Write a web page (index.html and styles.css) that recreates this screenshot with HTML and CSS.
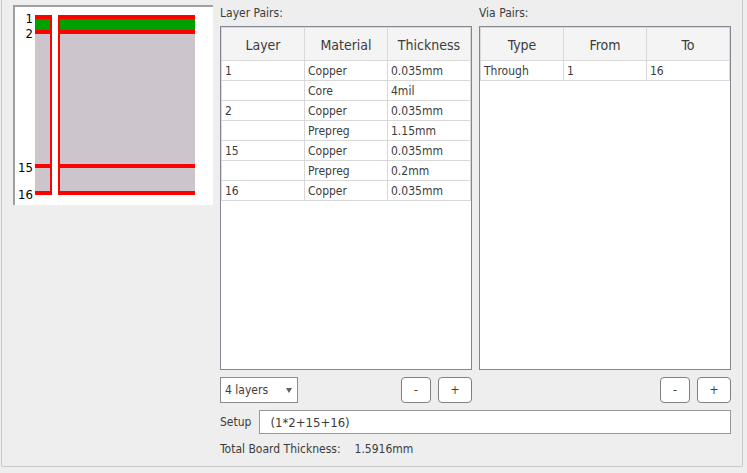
FILE: index.html
```html
<!DOCTYPE html>
<html lang="en">
<head>
<meta charset="utf-8">
<title>Board Layers</title>
<link rel="stylesheet" href="styles.css">
</head>
<body>
<main class="panel">
  <div class="preview">
    <svg class="stack" viewBox="0 0 198 198" width="198" height="198" role="img" aria-label="Layer stack preview">
      <g shape-rendering="crispEdges">
        <rect class="prepreg" x="20" y="8" width="160" height="180"/>
        <rect class="core" x="20" y="12" width="160" height="11"/>
        <rect class="copper" x="20" y="8" width="160" height="4"/>
        <rect class="copper" x="20" y="23" width="160" height="4"/>
        <rect class="copper" x="20" y="157" width="160" height="4"/>
        <rect class="copper" x="20" y="184" width="160" height="4"/>
        <rect class="copper" x="35" y="8" width="10" height="180"/>
        <rect class="hole" x="37" y="8" width="6" height="180"/>
      </g>
      <g class="stack-label" text-anchor="end">
        <text x="18" y="16">1</text>
        <text x="18" y="31">2</text>
        <text x="18" y="165">15</text>
        <text x="18" y="192">16</text>
      </g>
    </svg>
  </div>
  <div class="settings">
    <div class="pairs">
      <section class="pair">
        <h2 class="caption" id="layer-caption">Layer Pairs:</h2>
        <div class="list">
          <table class="grid" aria-labelledby="layer-caption">
            <thead><tr><th>Layer</th><th>Material</th><th>Thickness</th></tr></thead>
            <tbody>
              <tr><td>1</td><td>Copper</td><td>0.035mm</td></tr>
              <tr><td></td><td>Core</td><td>4mil</td></tr>
              <tr><td>2</td><td>Copper</td><td>0.035mm</td></tr>
              <tr><td></td><td>Prepreg</td><td>1.15mm</td></tr>
              <tr><td>15</td><td>Copper</td><td>0.035mm</td></tr>
              <tr><td></td><td>Prepreg</td><td>0.2mm</td></tr>
              <tr><td>16</td><td>Copper</td><td>0.035mm</td></tr>
            </tbody>
          </table>
        </div>
        <div class="actions">
          <div class="picker">
            <select class="select" aria-label="Number of layers">
              <option>2 layers</option>
              <option selected>4 layers</option>
            </select>
            <svg class="arrow" viewBox="0 0 6 5" width="6" height="5" aria-hidden="true"><path d="M0 0h6L3 5z"/></svg>
          </div>
          <button class="btn btn-remove" type="button" aria-label="Remove layer pair">-</button>
          <button class="btn btn-add" type="button" aria-label="Add layer pair">+</button>
        </div>
      </section>
      <section class="pair">
        <h2 class="caption" id="via-caption">Via Pairs:</h2>
        <div class="list">
          <table class="grid" aria-labelledby="via-caption">
            <thead><tr><th>Type</th><th>From</th><th>To</th></tr></thead>
            <tbody>
              <tr><td>Through</td><td>1</td><td>16</td></tr>
            </tbody>
          </table>
        </div>
        <div class="actions">
          <button class="btn btn-remove" type="button" aria-label="Remove via pair">-</button>
          <button class="btn btn-add" type="button" aria-label="Add via pair">+</button>
        </div>
      </section>
    </div>
    <div class="setup">
      <label for="setup">Setup</label>
      <input class="field" id="setup" type="text" value="(1*2+15+16)">
    </div>
    <p class="total"><span>Total Board Thickness:</span><output>1.5916mm</output></p>
  </div>
</main>
</body>
</html>
```
FILE: styles.css
```css
* { box-sizing: border-box; }

body {
  margin: 0;
  min-height: 100vh;
  display: flex;
  padding: 0 4px 6px 1px;
  background: #eee;
  color: #3c3c3c;
  font: 12px/16px "DejaVu Sans Condensed", "Noto Sans", sans-serif;
}

.panel {
  flex: 1;
  display: flex;
  gap: 7px;
  padding: 5px 11px 9px;
  border: 1px solid #c8c8c8;
  border-top: 0;
  border-radius: 0 0 2px 2px;
}

.preview {
  flex: none;
  align-self: flex-start;
  border: solid #a0a0a0;
  border-width: 2px 0 0 2px;
  background: #fff;
}

.stack { display: block; }
.prepreg { fill: #cdc5cc; }
.core { fill: #00a000; }
.copper { fill: #f00; }
.hole { fill: #fff; }
.stack-label { fill: #000; font-size: 13px; }

.settings {
  flex: 1;
  min-width: 0;
  display: flex;
  flex-direction: column;
  gap: 7px;
}

.pairs {
  flex: 1;
  display: flex;
  gap: 7px;
}

.pair {
  flex: 1;
  min-width: 0;
  display: flex;
  flex-direction: column;
}

.caption {
  margin: 0 0 5px;
  font-size: 12px;
  font-weight: normal;
}

.list {
  flex: 1;
  border: 1px solid #828790;
  background: #fff;
}

.grid {
  width: 100%;
  table-layout: fixed;
  border-collapse: collapse;
}

.grid th,
.grid td {
  border: 1px solid #d8d8d8;
  font-weight: normal;
}

.grid th {
  height: 33px;
  padding: 2px 0 0;
  background: #f4f4f4;
  font-size: 14px;
}

.grid td {
  height: 20px;
  padding: 0 3px;
}

.actions {
  display: flex;
  justify-content: flex-end;
  gap: 7px;
  margin-top: 7px;
}

.picker {
  position: relative;
  margin-right: auto;
}

.select {
  appearance: none;
  width: 78px;
  height: 26px;
  padding: 0 16px 0 4px;
  border: 1px solid #8c8c8c;
  border-radius: 0;
  background: #fff;
  color: inherit;
  font: inherit;
}

.arrow {
  position: absolute;
  top: 11px;
  right: 6px;
  fill: #606060;
  pointer-events: none;
}

.btn {
  height: 26px;
  padding: 0;
  border: 1px solid #808080;
  border-radius: 4px;
  background: #fff;
  color: inherit;
  font: inherit;
}

.btn-remove { width: 30px; }
.btn-add { width: 34px; }

.setup {
  display: flex;
  align-items: center;
  gap: 8px;
}

.field {
  flex: 1;
  min-width: 0;
  height: 24px;
  padding: 0 10px;
  border: 1px solid #999;
  background: #fff;
  color: inherit;
  font: inherit;
  font-size: 13px;
}

.total {
  display: flex;
  gap: 14px;
  margin: 0;
}
```
